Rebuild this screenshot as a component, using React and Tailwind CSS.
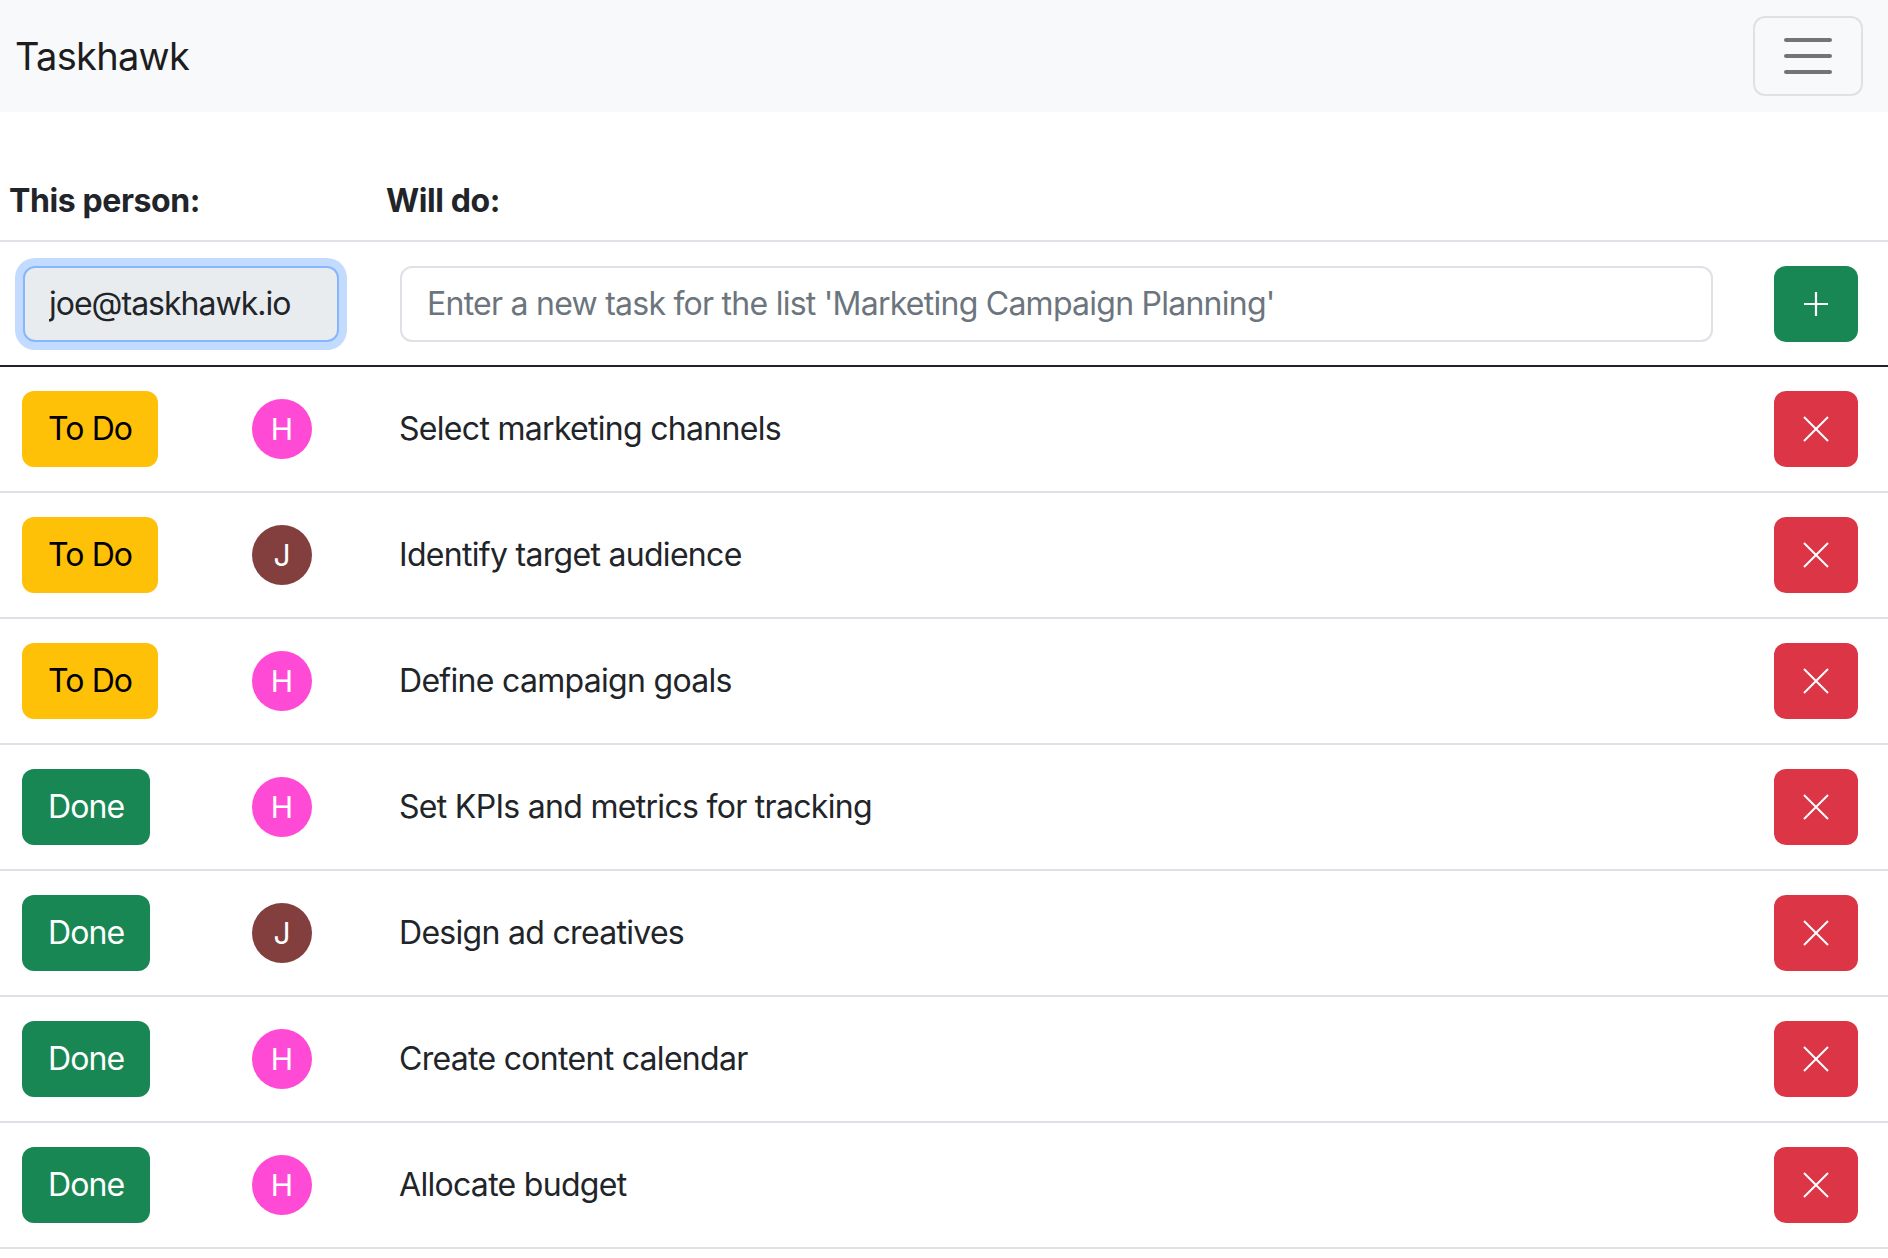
import React, { useState } from "react";

const tasks = [
  { status: "todo", who: "H", text: "Select marketing channels" },
  { status: "todo", who: "J", text: "Identify target audience" },
  { status: "todo", who: "H", text: "Define campaign goals" },
  { status: "done", who: "H", text: "Set KPIs and metrics for tracking" },
  { status: "done", who: "J", text: "Design ad creatives" },
  { status: "done", who: "H", text: "Create content calendar" },
  { status: "done", who: "H", text: "Allocate budget" },
];

function PlusIcon() {
  return (
    <svg width="26" height="26" viewBox="0 0 26 26" fill="none" stroke="white" strokeWidth="2.2">
      <path d="M13 1v24M1 13h24" />
    </svg>
  );
}

function XIcon() {
  return (
    <svg width="26" height="26" viewBox="0 0 26 26" fill="none" stroke="white" strokeWidth="2">
      <path d="M1 1l24 24M25 1L1 25" />
    </svg>
  );
}

function Avatar({ who }) {
  const color = who === "J" ? "bg-[#833f3e]" : "bg-[#ff4ad6]";
  return (
    <div
      className={`w-[60px] h-[60px] rounded-full ${color} flex items-center justify-center text-white text-[30px] leading-none`}
    >
      {who}
    </div>
  );
}

function StatusButton({ status }) {
  if (status === "todo") {
    return (
      <button className="h-[76px] px-[26px] rounded-[12px] bg-[#ffc107] text-black text-[32px] leading-[48px] tracking-[-0.9px]">
        To Do
      </button>
    );
  }
  return (
    <button className="h-[76px] px-[26px] rounded-[12px] bg-[#198754] text-white text-[32px] leading-[48px] tracking-[-0.9px]">
      Done
    </button>
  );
}

export default function App() {
  const [newTask, setNewTask] = useState("");

  return (
    <div className="min-h-screen bg-white text-[#212529] font-['Inter','Liberation_Sans',sans-serif]">
      {/* navbar */}
      <nav className="h-[112px] bg-[#f8f9fa] flex items-center justify-between pl-[15px] pr-[25px]">
        <span className="text-[38px] tracking-[-0.7px] text-[#1d1d1f]">Taskhawk</span>
        <button className="w-[110px] h-[80px] border-2 border-[#e0e1e2] rounded-[12px] flex flex-col items-center justify-center gap-[12px]">
          <span className="block w-[48px] h-[4px] rounded-full bg-[#757575]" />
          <span className="block w-[48px] h-[4px] rounded-full bg-[#757575]" />
          <span className="block w-[48px] h-[4px] rounded-full bg-[#757575]" />
        </button>
      </nav>

      <main className="mt-[50px]">
        {/* header */}
        <div className="flex h-[80px] items-center border-b-2 border-[#dee2e6] text-[32px] font-bold tracking-[-0.4px]">
          <div className="w-[386px] pl-[9px]">This person:</div>
          <div>Will do:</div>
        </div>

        {/* new task row */}
        <div className="flex items-center h-[125px] border-b-2 border-[#212529]">
          <div className="w-[400px] pl-[23px]">
            <input
              readOnly
              value="joe@taskhawk.io"
              className="w-[316px] h-[76px] px-[24px] rounded-[12px] border-2 border-[#86b7fe] bg-[#e9ecef] text-[32px] text-[#212529] outline-none shadow-[0_0_0_8px_rgba(13,110,253,0.25)] tracking-[-1px]"
            />
          </div>
          <input
            value={newTask}
            onChange={(e) => setNewTask(e.target.value)}
            placeholder="Enter a new task for the list 'Marketing Campaign Planning'"
            className="w-[1313px] h-[76px] px-[25px] rounded-[12px] border-2 border-[#dee2e6] bg-white text-[32px] outline-none placeholder:text-[#6c757d] tracking-[-0.75px]"
          />
          <div className="flex-1 flex justify-end pr-[30px]">
            <button className="w-[84px] h-[76px] rounded-[12px] bg-[#198754] flex items-center justify-center">
              <PlusIcon />
            </button>
          </div>
        </div>

        {/* task list */}
        {tasks.map((t, i) => (
          <div key={i} className="flex items-center py-[24px] border-b-2 border-[#dee2e6]">
            <div className="w-[252px] pl-[22px]">
              <StatusButton status={t.status} />
            </div>
            <div className="w-[147px]">
              <Avatar who={t.who} />
            </div>
            <div className="flex-1 text-[32px] tracking-[-0.7px]">{t.text}</div>
            <div className="pr-[30px]">
              <button className="w-[84px] h-[76px] rounded-[12px] bg-[#dc3545] flex items-center justify-center">
                <XIcon />
              </button>
            </div>
          </div>
        ))}
      </main>
    </div>
  );
}
